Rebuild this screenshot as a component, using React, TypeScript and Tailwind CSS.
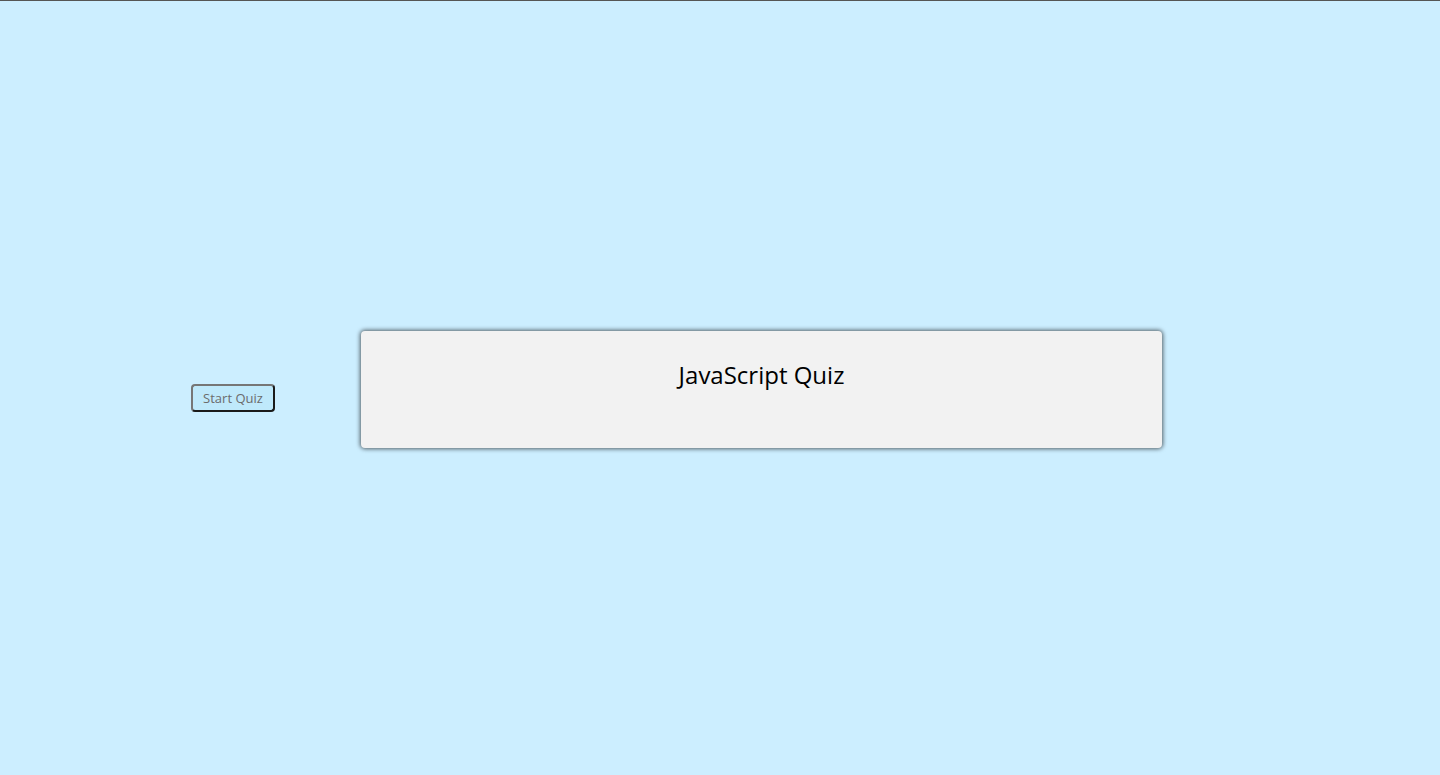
export default function App() {
  return (
    <div className="min-h-screen w-full bg-[#cceeff] border-t border-[#555] font-['Open_Sans',sans-serif]">
      <div className="flex h-[774px] items-start pl-[191px] pt-[330px]">
        {/* Start button */}
        <button
          disabled
          className="mt-[53px] h-[28px] w-[84px] rounded-[4px] border-2 border-t-[#767676] border-l-[#767676] border-r-[#1a1a1a] border-b-[#1a1a1a] bg-[#bfe9fb] text-[13px] leading-none text-[#6b6b6b]"
        >
          Start Quiz
        </button>

        {/* Quiz card */}
        <div className="ml-[86px] h-[117px] w-[801px] rounded-[4px] bg-[#f2f2f2] shadow-[0_0_4px_1px_rgba(0,0,0,0.6)]">
          <h1 className="pt-[29px] text-center text-[24px] leading-[30px] text-black">
            JavaScript Quiz
          </h1>
        </div>
      </div>
    </div>
  );
}
